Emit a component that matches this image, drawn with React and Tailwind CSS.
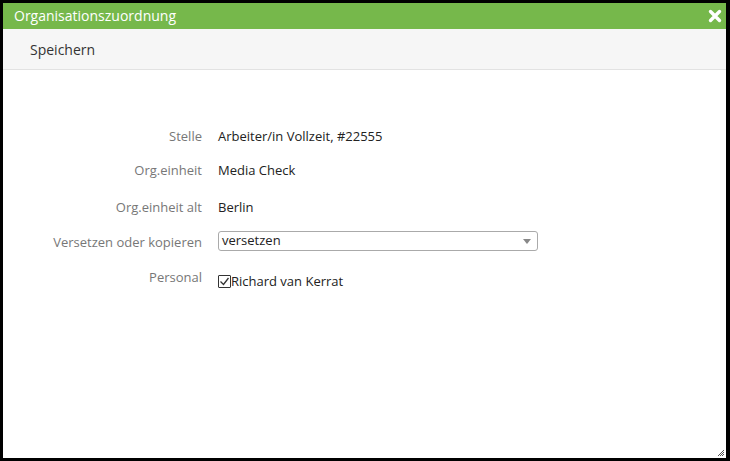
export default function App() {
  const rows = [
    ["Stelle", "Arbeiter/in Vollzeit, #22555", "h-[34px]"],
    ["Org.einheit", "Media Check", "h-[37px]"],
    ["Org.einheit alt", "Berlin", "h-[34px]"],
  ];
  return (
    <div className="w-[730px] h-[461px] bg-black pt-[3px] pl-[3px] pr-[4px] pb-[3px]" style={{ fontFamily: '"Open Sans", sans-serif' }}>
      <div className="relative w-full h-full bg-white flex flex-col">
        <div className="h-[26px] bg-[#76b84b] flex items-center justify-between pl-[11px] pr-[4px]">
          <span className="text-white text-[14px] leading-none">Organisationszuordnung</span>
          <svg width="14" height="14" viewBox="0 0 14 14">
            <path d="M2.5 2.5 L11.5 11.5 M11.5 2.5 L2.5 11.5" stroke="white" strokeWidth="3.4" strokeLinecap="round" />
          </svg>
        </div>
        <div className="h-[41px] bg-[#f6f6f6] border-b border-[#e2e2e2] flex items-center pl-[27px]">
          <span className="text-[14px] text-[#333]">Speichern</span>
        </div>
        <div className="pt-[57px] flex flex-col text-[13px]">
          {rows.map(([l, v, h]) => (
            <div key={l} className={"flex items-start " + h}>
              <div className="w-[215px] text-right text-[#777] pr-[16px]">{l}</div>
              <div className="text-[#222]">{v}</div>
            </div>
          ))}
          <div className="flex h-[37px] items-start">
            <div className="w-[215px] text-right text-[#777] pr-[16px] pt-[1px]">Versetzen oder kopieren</div>
            <div className="w-[320px] h-[20px] border border-[#aaa] rounded-[3px] flex items-center justify-between pl-[3px] pr-[6px] -mt-[1px]">
              <span className="text-[#222] text-[13px]">versetzen</span>
              <svg width="8" height="5" viewBox="0 0 8 5"><path d="M0 0 H8 L4 5 Z" fill="#888" /></svg>
            </div>
          </div>
          <div className="flex items-start">
            <div className="w-[215px] text-right text-[#777] pr-[16px] -mt-[1px]">Personal</div>
            <div className="flex items-center text-[#222] pt-[3px]">
              <span className="w-[13px] h-[13px] border border-[#333] rounded-[1px] flex items-center justify-center">
                <svg width="11" height="11" viewBox="0 0 11 11"><path d="M1.5 5.5 L4.5 8.5 L9.5 2" stroke="#333" strokeWidth="1.3" fill="none" /></svg>
              </span>
              <span>Richard van Kerrat</span>
            </div>
          </div>
        </div>
        <svg className="absolute right-[1px] bottom-[1px]" width="8" height="8" viewBox="0 0 8 8">
          <path d="M7 1 L1 7 M7 3 L3 7 M7 5 L5 7" stroke="#555" strokeWidth="1" />
        </svg>
      </div>
    </div>
  );
}
